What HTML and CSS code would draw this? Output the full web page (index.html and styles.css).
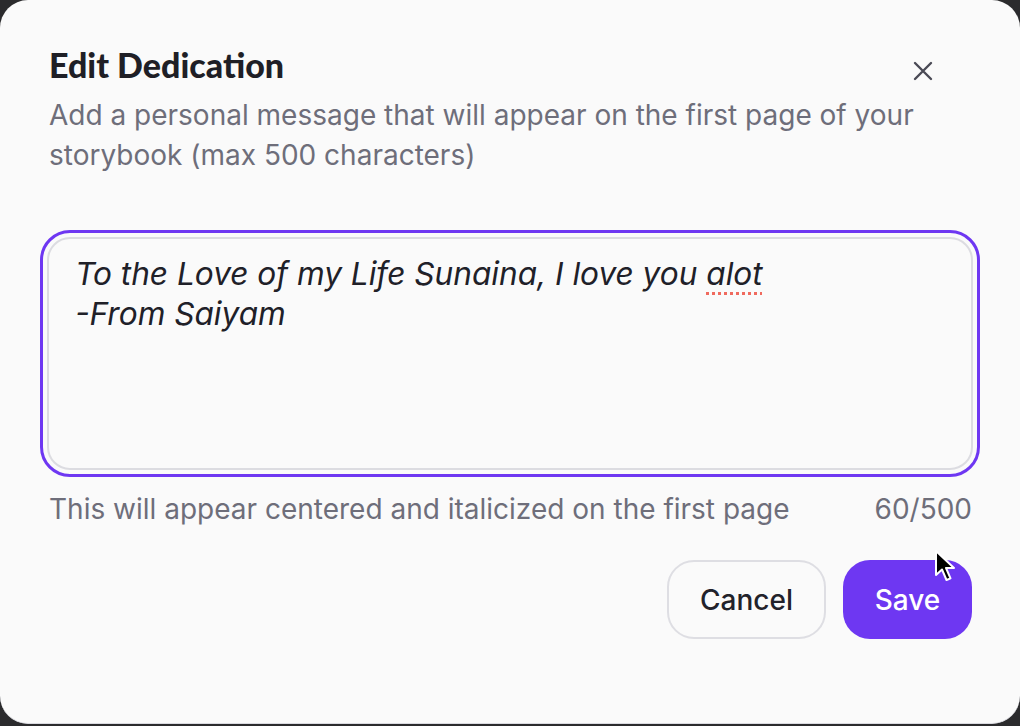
FILE: index.html
```html
<!DOCTYPE html>
<html lang="en">
<head>
<meta charset="utf-8">
<title>Edit Dedication</title>
<link rel="stylesheet" href="styles.css">
</head>
<body>
<div class="modal">
  <header class="head">
    <h2 class="title">Edit Dedication</h2>
    <p class="subtitle">Add a personal message that will appear on the first page of your storybook (max 500 characters)</p>
    <button class="close" aria-label="Close">
      <svg width="22" height="22" viewBox="0 0 22 22"><path d="M3 3 L19 19 M19 3 L3 19" stroke="#4a4a55" stroke-width="2.4" stroke-linecap="round" fill="none"/></svg>
    </button>
  </header>
  <div class="ring">
    <div class="input">To the Love of my Life Sunaina, I love you <span class="spell">alot</span><br>-From Saiyam</div>
  </div>
  <div class="meta">
    <span>This will appear centered and italicized on the first page</span>
    <span>60/500</span>
  </div>
  <div class="actions">
    <button class="btn btn-cancel">Cancel</button>
    <button class="btn btn-save">Save</button>
  </div>
  <svg class="cursor" width="22" height="34" viewBox="0 0 22 34"><path d="M2 2 L2 26 L8 20.5 L12.5 31 L16.5 29.3 L12 19 L20 19 Z" fill="#000" stroke="#fff" stroke-width="2" stroke-linejoin="round"/></svg>
</div>
</body>
</html>
```
FILE: styles.css
```css
* { box-sizing: border-box; }
html, body { margin: 0; padding: 0; }
body {
  background: #2b2b2d;
  width: 1020px;
  height: 726px;
  overflow: hidden;
  font-family: "Inter", "Liberation Sans", sans-serif;
}
.modal {
  position: relative;
  width: 1020px;
  height: 724px;
  background: #fafafa;
  border-radius: 28px;
  border-bottom: 1px solid #dadae0;
  padding: 45px 48px 0 49px;
}
.head {
  position: relative;
}
.title {
  margin: 0;
  font-family: "Lato", sans-serif;
  font-weight: 900;
  font-size: 34px;
  line-height: 40px;
  color: #1f1f26;
}
.subtitle {
  margin: 10px 0 0;
  font-size: 28px;
  line-height: 40px;
  color: #6e6e7a;
  max-width: 880px;
}
.close {
  position: absolute;
  top: 15px;
  right: 38px;
  padding: 0;
  border: none;
  background: none;
  width: 22px;
  height: 22px;
  display: flex;
}
.ring {
  margin: 55px -8px 0 -9px;
  border: 3px solid #6e37f2;
  border-radius: 30px;
  padding: 4px;
}
.input {
  height: 233px;
  border: 2px solid #dcdce1;
  border-radius: 23px;
  padding: 15px 26px;
  font-size: 31.6px;
  font-style: italic;
  line-height: 40px;
  color: #202028;
}
.spell {
  text-decoration: underline dotted #f06a5e;
  text-decoration-thickness: 3px;
  text-underline-offset: 7px;
}
.meta {
  display: flex;
  justify-content: space-between;
  margin-top: 13px;
  font-size: 28px;
  line-height: 38px;
  color: #6e6e7a;
}
.actions {
  display: flex;
  justify-content: flex-end;
  gap: 17px;
  margin-top: 32px;
}
.btn {
  height: 79px;
  border-radius: 27px;
  font-family: "Inter", sans-serif;
  font-size: 28px;
  font-weight: 500;
  padding: 0;
}
.btn-cancel {
  width: 159px;
  background: #fafafa;
  border: 2px solid #dedee3;
  color: #22222a;
}
.btn-save {
  width: 129px;
  background: #6e37f2;
  border: none;
  color: #ffffff;
}
.cursor {
  position: absolute;
  left: 934px;
  top: 549px;
}
```
